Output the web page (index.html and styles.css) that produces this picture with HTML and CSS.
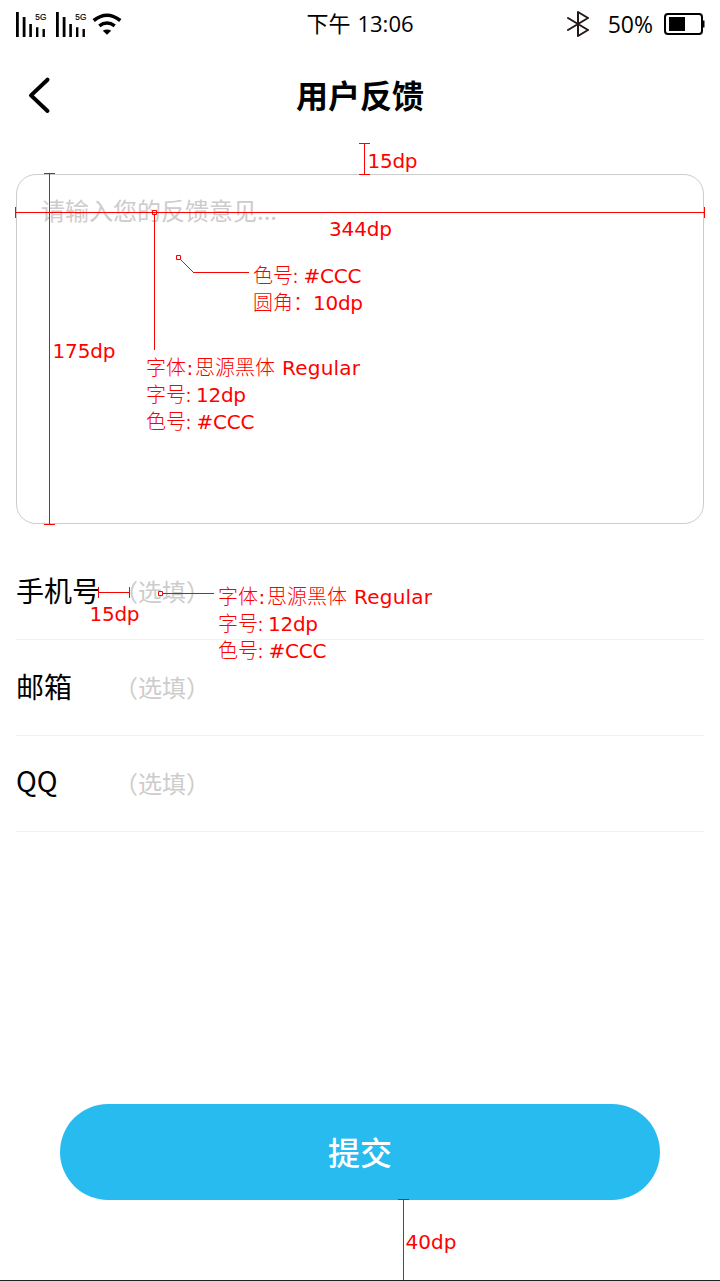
FILE: index.html
```html
<!DOCTYPE html>
<html lang="zh-CN">
<head>
<meta charset="utf-8">
<title>用户反馈</title>
<link rel="stylesheet" href="styles.css">
</head>
<body>
<div class="screen">
  <div class="status">
    <svg class="status-left" width="112" height="48" viewBox="0 0 112 48">
      <g id="signal">
        <path d="M16 12h2.8v25H16zM22.7 17h2.8v20h-2.8zM29.3 24h2.6v13h-2.6zM36 27.3h2.4V37H36zM42.5 29h2.4v8h-2.4z"/>
        <text x="35.3" y="20" class="five-g" textLength="11" lengthAdjust="spacingAndGlyphs">5G</text>
      </g>
      <use href="#signal" x="40"/>
      <path class="wifi" d="M93.700 20.500Q107 10 120.300 20.500M99.300 25.900Q107 20.100 114.700 25.900"/>
      <path d="M102.800 30.700Q107 28.200 111.200 30.700L107 34.700z"/>
    </svg>
    <div class="clock"><span class="clock-cn">下午</span><span class="clock-time">13:06</span></div>
    <div class="status-right">
      <svg width="24" height="28" viewBox="0 0 24 28"><path class="bluetooth" d="M1 8L21 20L11 26V2L21 8L1 20"/></svg>
      <span class="percent">50%</span>
      <svg width="42" height="24" viewBox="0 0 42 24"><rect class="battery" x="2" y="2" width="37" height="20" rx="3"/><path d="M6 5h16v14H6zM39 8.500h2.500v7H39z"/></svg>
    </div>
  </div>
  <div class="header">
    <svg class="back" width="26" height="40" viewBox="0 0 26 40"><path d="M21.500 4.700L5 20.400L21.500 36"/></svg>
    <div class="title">用户反馈</div>
  </div>
  <div class="feedback">请输入您的反馈意见...</div>
  <div class="fields">
    <div class="field"><span class="label">手机号</span><span class="hint">（选填）</span></div>
    <div class="field"><span class="label">邮箱</span><span class="hint">（选填）</span></div>
    <div class="field"><span class="label label-latin">QQ</span><span class="hint">（选填）</span></div>
  </div>
  <div class="submit">提交</div>
  <svg class="notes" width="720" height="1281" viewBox="0 0 720 1281">
    <g class="lines">
      <path d="M359 143.500h11M359 174.500h11M364.500 143v32"/>
      <path d="M44 173.500h11M44 524.500h11M49.500 173v352"/>
      <path d="M15.500 207v11M704.500 207v11M15 212.500h690"/>
      <path d="M154.500 215v135M193 272.500h56M180.500 259.500l13 13"/>
      <path d="M152.500 210.500h4v4h-4zM176.500 255.500h4v4h-4z"/>
      <path d="M98.500 587v11M129.500 587v11M98 592.500h32"/>
      <path d="M158.500 591.500h4v4h-4zM163 593.500h51"/>
      <path d="M398 1199.500h11M403.500 1199v82M398 1280.500h11"/>
    </g>
    <g class="latin">
      <text x="367.500" y="168" textLength="50">15dp</text>
      <text x="329" y="236" textLength="63">344dp</text>
      <text x="52.500" y="358" textLength="63">175dp</text>
      <text x="89.500" y="621" textLength="50">15dp</text>
      <text x="405.500" y="1249" textLength="51">40dp</text>
    </g>
    <g>
      <text class="cn" x="253" y="283">色号:</text><text class="latin" x="303.500" y="283" textLength="58">#CCC</text>
      <text class="cn" x="253" y="310">圆角：</text><text class="latin" x="313" y="310" textLength="50">10dp</text>
    </g>
    <g id="font-note">
      <text class="cn" x="146" y="375">字体</text><text class="latin" x="186.500" y="375">:</text><text class="cn" x="195" y="375">思源黑体</text><text class="latin" x="282" y="375" textLength="78">Regular</text>
      <text class="cn" x="146" y="402">字号:</text><text class="latin" x="196" y="402" textLength="50">12dp</text>
      <text class="cn" x="146" y="429">色号:</text><text class="latin" x="196.500" y="429" textLength="58">#CCC</text>
    </g>
    <use href="#font-note" x="72" y="229"/>
  </svg>
</div>
</body>
</html>
```
FILE: styles.css
```css
body {
  margin: 0;
  background: #fff;
  color: #000;
  font-family: "Noto Sans CJK SC", sans-serif;
}
.screen {
  position: relative;
  box-sizing: border-box;
  width: 720px;
  height: 1281px;
  overflow: hidden;
  display: flex;
  flex-direction: column;
  border-bottom: 1px solid #222;
}
.status {
  height: 48px;
  display: grid;
  grid-template-columns: 250px 220px 250px;
  grid-template-rows: 48px;
  align-items: center;
}
.status-left {
  overflow: visible;
}
.five-g {
  font: 9px "Liberation Sans", sans-serif;
  stroke: #000;
  stroke-width: 0.2;
}
.wifi {
  fill: none;
  stroke: #000;
  stroke-width: 3.6;
}
.clock {
  display: flex;
  justify-content: center;
  align-items: baseline;
  gap: 7px;
  line-height: 44px;
  padding-bottom: 4px;
}
.clock-cn {
  font-size: 22px;
}
.clock-time {
  font-family: "Open Sans", sans-serif;
  font-size: 22px;
}
.status-right {
  display: flex;
  justify-content: flex-end;
  align-items: center;
  padding-right: 15px;
}
.percent {
  margin: 0 10px 0 17px;
  font-family: "Open Sans", sans-serif;
  font-size: 23px;
  line-height: 46px;
}
.bluetooth {
  fill: none;
  stroke: #231815;
  stroke-width: 2;
  stroke-linejoin: round;
  stroke-linecap: round;
}
.battery {
  fill: none;
  stroke: #000;
  stroke-width: 2;
}
.header {
  height: 95px;
  display: grid;
  grid-template-columns: 100px 1fr 100px;
  align-items: center;
}
.back {
  margin-left: 26px;
  padding-bottom: 2px;
  fill: none;
  stroke: #000;
  stroke-width: 4;
  stroke-linecap: round;
  stroke-linejoin: round;
}
.title {
  padding-bottom: 4px;
  text-align: center;
  font-size: 32px;
  font-weight: 700;
  line-height: 48px;
}
.feedback {
  box-sizing: border-box;
  height: 350px;
  margin: 31px 16px 20px;
  padding: 17px 24px;
  border: 1px solid #ccc;
  border-radius: 20px;
  color: #ccc;
  font-size: 24px;
  line-height: 36px;
}
.fields {
  margin: 0 16px;
}
.field {
  box-sizing: border-box;
  height: 96px;
  display: grid;
  grid-template-columns: 98px 1fr;
  align-items: center;
  border-bottom: 1px solid #f2f2f2;
}
.label {
  padding-bottom: 3px;
  font-size: 28px;
  line-height: 40px;
}
.label-latin {
  padding-bottom: 8px;
}
.hint {
  padding-bottom: 2px;
  color: #ccc;
  font-size: 24px;
  line-height: 40px;
}
.submit {
  height: 96px;
  margin: 272px 60px 0;
  border-radius: 48px;
  background: #27bbf0;
  color: #fff;
  text-align: center;
  font-size: 32px;
  font-weight: 500;
  line-height: 94px;
}
.notes {
  position: absolute;
  left: 0;
  top: 0;
  fill: #f00;
}
.lines {
  fill: none;
  stroke: #f00;
  stroke-width: 1;
}
.latin {
  font-family: "DejaVu Sans", sans-serif;
  font-size: 20px;
}
.cn {
  font-family: "Noto Sans CJK SC", sans-serif;
  font-size: 20px;
  font-weight: 300;
}
```
